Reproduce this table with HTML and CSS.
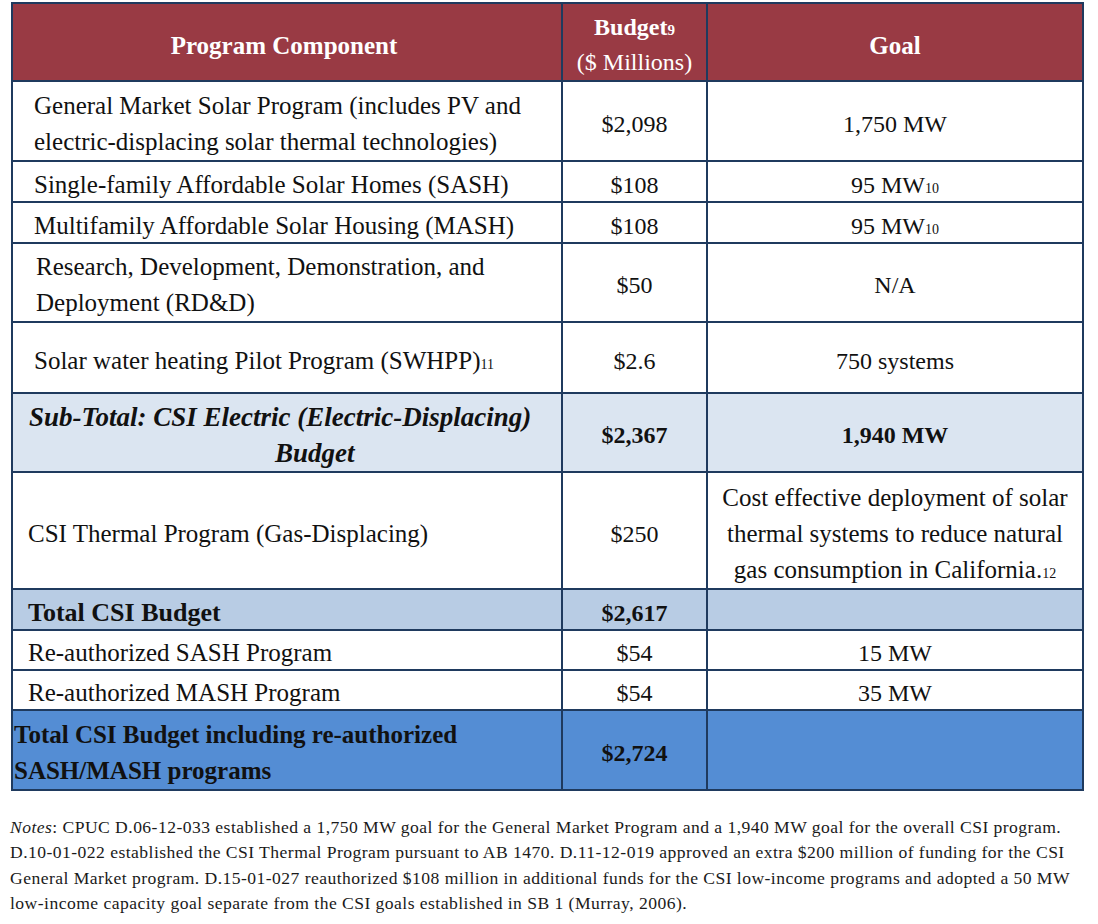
FILE: index.html
```html
<!DOCTYPE html>
<html lang="en">
<head>
<meta charset="utf-8">
<title>CSI Program Budget</title>
<link rel="stylesheet" href="styles.css">
</head>
<body>
<div class="page">
  <table class="budget">
    <colgroup>
      <col class="c-comp">
      <col class="c-budget">
      <col class="c-goal">
    </colgroup>
    <thead>
      <tr class="hdr">
        <th class="th-comp">Program Component</th>
        <th class="th-num"><span class="line">Budget<span class="fn">9</span></span><span class="line reg">($ Millions)</span></th>
        <th class="th-goal">Goal</th>
      </tr>
    </thead>
    <tbody>
      <tr class="h80">
        <td class="comp">General Market Solar Program (includes PV and<br>electric-displacing solar thermal technologies)</td>
        <td class="num">$2,098</td>
        <td class="goal">1,750 MW</td>
      </tr>
      <tr class="h41 single">
        <td class="comp">Single-family Affordable Solar Homes (SASH)</td>
        <td class="num">$108</td>
        <td class="goal">95 MW<span class="fn">10</span></td>
      </tr>
      <tr class="h41 single">
        <td class="comp">Multifamily Affordable Solar Housing (MASH)</td>
        <td class="num">$108</td>
        <td class="goal">95 MW<span class="fn">10</span></td>
      </tr>
      <tr class="h79">
        <td class="comp comp-rdd">Research, Development, Demonstration, and<br>Deployment (RD&amp;D)</td>
        <td class="num">$50</td>
        <td class="goal">N/A</td>
      </tr>
      <tr class="h71">
        <td class="comp">Solar water heating Pilot Program (SWHPP)<span class="fn">11</span></td>
        <td class="num">$2.6</td>
        <td class="goal">750 systems</td>
      </tr>
      <tr class="h79 sub">
        <td class="comp comp-sub"><span class="sub-l1">Sub-Total: CSI Electric (Electric-Displacing)</span><span class="sub-l2">Budget</span></td>
        <td class="num b">$2,367</td>
        <td class="goal b">1,940 MW</td>
      </tr>
      <tr class="h117">
        <td class="comp comp-tight">CSI Thermal Program (Gas-Displacing)</td>
        <td class="num">$250</td>
        <td class="goal goal-text">Cost effective deployment of solar<br>thermal systems to reduce natural<br>gas consumption in California.<span class="fn">12</span></td>
      </tr>
      <tr class="h41 single total">
        <td class="comp comp-tight b">Total CSI Budget</td>
        <td class="num b">$2,617</td>
        <td class="goal"></td>
      </tr>
      <tr class="h40 single">
        <td class="comp comp-tight">Re-authorized SASH Program</td>
        <td class="num">$54</td>
        <td class="goal">15 MW</td>
      </tr>
      <tr class="h40 single">
        <td class="comp comp-tight">Re-authorized MASH Program</td>
        <td class="num">$54</td>
        <td class="goal">35 MW</td>
      </tr>
      <tr class="h80 grand">
        <td class="comp comp-flush b">Total CSI Budget including re-authorized<br>SASH/MASH programs</td>
        <td class="num b">$2,724</td>
        <td class="goal"></td>
      </tr>
    </tbody>
  </table>

  <p class="notes"><em>Notes</em>: CPUC D.06-12-033 established a 1,750 MW goal for the General Market Program and a 1,940 MW goal for the overall CSI program.<br>D.10-01-022 established the CSI Thermal Program pursuant to AB 1470. D.11-12-019 approved an extra $200 million of funding for the CSI<br>General Market program. D.15-01-027 reauthorized $108 million in additional funds for the CSI low-income programs and adopted a 50 MW<br>low-income capacity goal separate from the CSI goals established in SB 1 (Murray, 2006).</p>
</div>
</body>
</html>
```

FILE: styles.css
```css
html, body {
  margin: 0;
  padding: 0;
  background: #ffffff;
}

body {
  font-family: "Liberation Serif", "Times New Roman", serif;
  color: #111111;
}

.page {
  padding: 2px 0 0 11px;
}

.budget {
  border-collapse: collapse;
  table-layout: fixed;
  width: 1071px;
}

.c-comp { width: 550px; }
.c-budget { width: 145px; }
.c-goal { width: 376px; }

.budget th,
.budget td {
  border: 2px solid #1f3a5e;
  padding: 6px 0 0 0;
  vertical-align: middle;
  line-height: 36px;
}

.budget .single td {
  line-height: 30px;
}

.budget .h79 td {
  padding-top: 5px;
}

.budget .hdr {
  height: 78px;
  background: #993a44;
  color: #ffffff;
}

.budget .hdr th {
  font-weight: bold;
  font-size: 25px;
  line-height: 35px;
  text-align: center;
}

.budget .th-comp {
  padding-right: 6px;
}

.th-num .line {
  display: block;
}

.budget .hdr .th-num {
  font-size: 24px;
}

.th-num .reg {
  font-weight: normal;
}

.fn {
  font-size: 14px;
  font-weight: normal;
  line-height: 0;
}

.hdr .fn {
  font-weight: bold;
  font-size: 15px;
}

.h40 { height: 40px; }
.h41 { height: 41px; }
.h71 { height: 71px; }
.h79 { height: 79px; }
.h80 { height: 80px; }
.h117 { height: 117px; }

.budget .comp {
  font-size: 25px;
  padding-left: 21px;
  text-align: left;
  white-space: nowrap;
}

.budget .comp-rdd {
  padding-left: 23px;
}

.budget .comp-tight {
  padding-left: 15px;
}

.budget .comp-flush {
  padding-left: 1px;
}

.budget .comp-sub {
  font-weight: bold;
  font-style: italic;
  font-size: 27px;
  padding-left: 16px;
}

.sub-l1,
.sub-l2 {
  display: block;
}

.sub-l2 {
  padding-left: 246px;
}

.budget .num {
  font-size: 24px;
  text-align: center;
}

.budget .goal {
  font-size: 24px;
  text-align: center;
}

.budget .goal-text {
  font-size: 25px;
}

.budget .b {
  font-weight: bold;
}

.budget .total .comp {
  font-size: 26px;
}

.budget .grand .comp {
  font-size: 25px;
}

.sub {
  background: #dbe5f1;
}

.total {
  background: #b8cce4;
}

.grand {
  background: #548dd4;
}

.notes {
  margin: 24px 0 0 -1px;
  font-size: 17.6px;
  letter-spacing: 0.45px;
  line-height: 25.4px;
  white-space: nowrap;
  color: #1a1a1a;
}
```
